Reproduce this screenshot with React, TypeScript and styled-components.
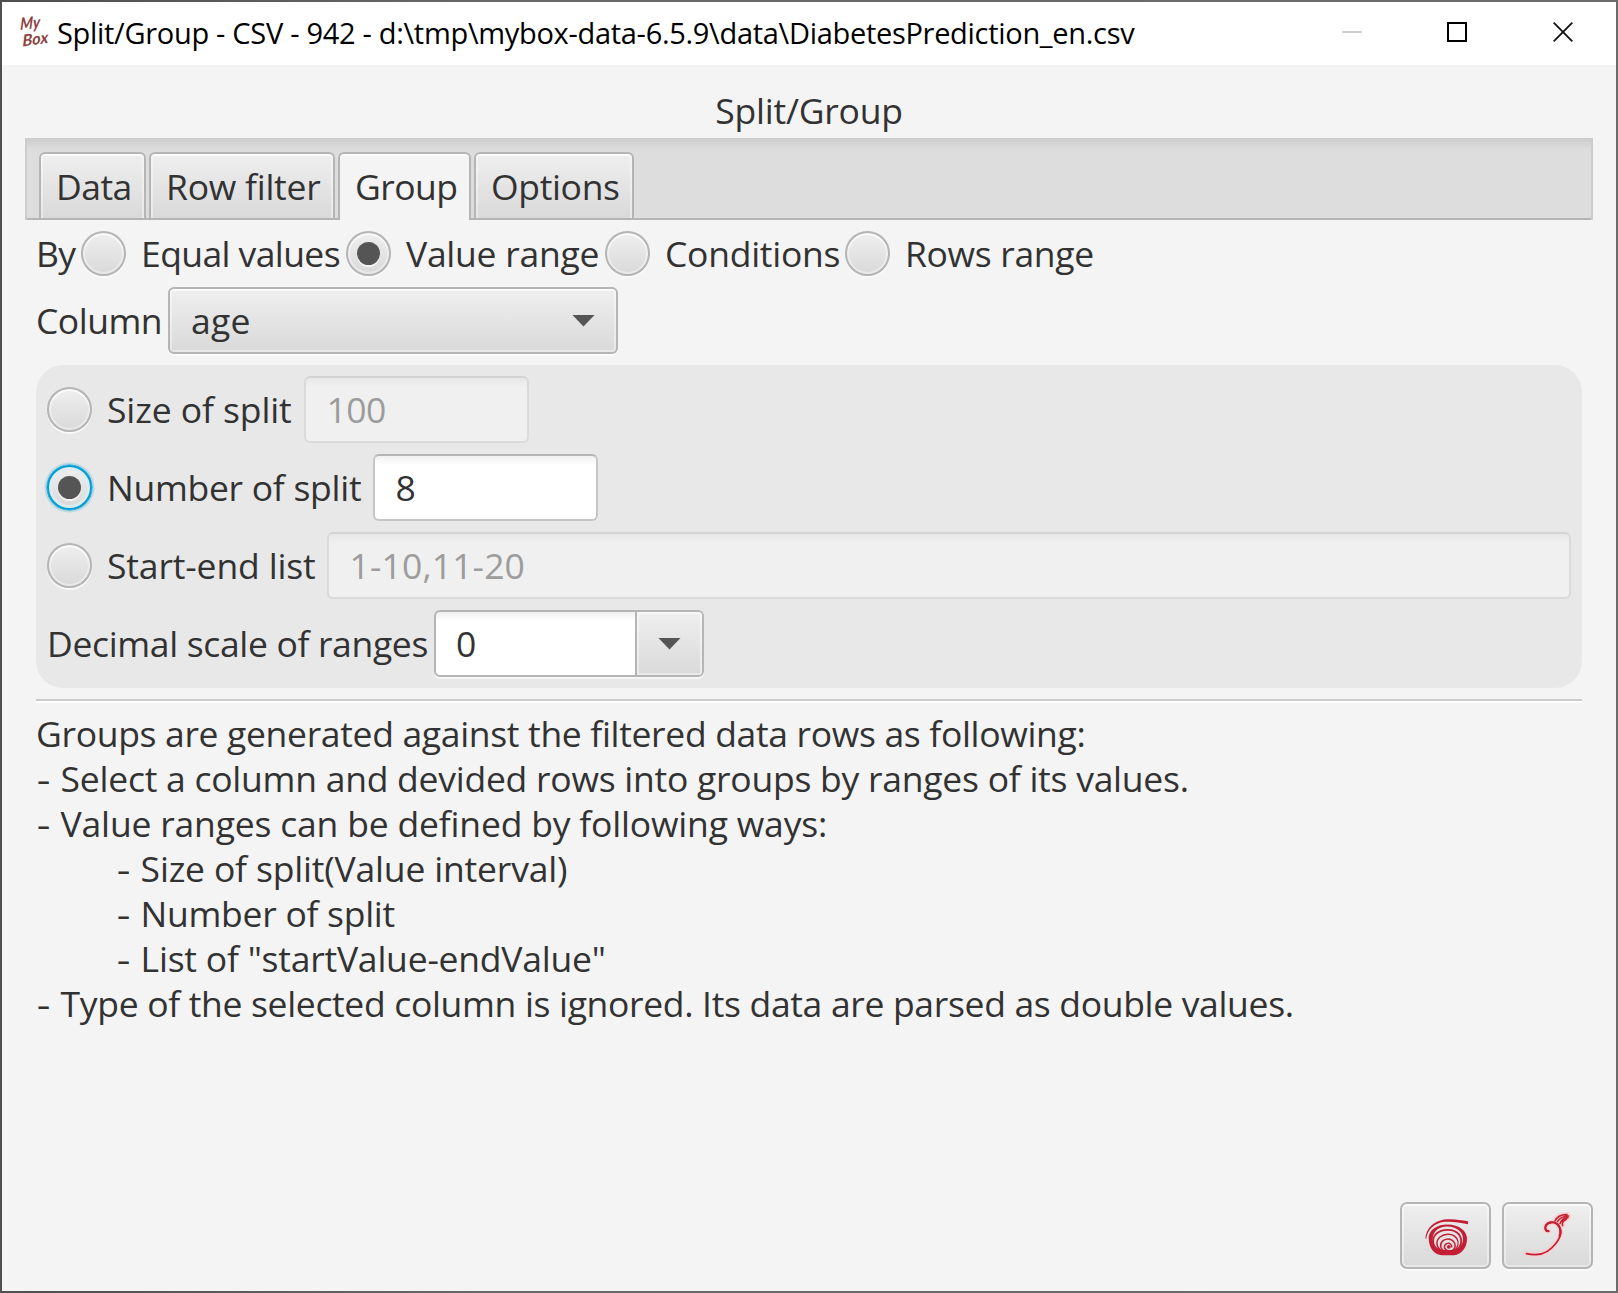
import React from "react";
import styled, { createGlobalStyle, css } from "styled-components";

const GlobalStyle = createGlobalStyle`
  *, *::before, *::after { box-sizing: border-box; }
  body { margin: 0; background: #5e5e5e; }
`;

const bevel = css`
  border: 2px solid #b5b5b5;
  background: linear-gradient(#efefef, #d9d9d9);
  box-shadow: inset 0 0 0 2px rgba(255, 255, 255, 0.4), inset 0 2px 0 rgba(255, 255, 255, 0.6), 0 2px 0 #fafafa;
`;

const Frame = styled.div`
  width: 1618px;
  height: 1293px;
  padding: 2px;
  background: linear-gradient(90deg, #4f4f4f, #686868 30%, #6b6b6b);
  font-family: "Open Sans", "Noto Sans", sans-serif;
  font-size: 35.5px;
  color: #323232;
`;
const Window = styled.div`
  width: 1614px;
  height: 1289px;
  background: #f4f4f4;
  display: flex;
  flex-direction: column;
`;
const TitleBar = styled.header`
  height: 63px;
  flex: none;
  background: #fff;
  display: flex;
  align-items: center;
  padding: 0 43px 4px 17px;
`;
const Logo = styled.svg`
  width: 32px;
  height: 34px;
  margin-right: 6px;
  flex: none;
  overflow: visible;
`;
const TitleText = styled.span<{ $track: number }>`
  flex: 1;
  padding-top: 3px;
  font-size: 29px;
  line-height: 40px;
  color: #000;
  white-space: pre;
  letter-spacing: ${(p) => p.$track}px;
`;
const WindowControls = styled.div`
  display: flex;
  gap: 85px;
`;
const Control = styled.svg`
  width: 20px;
  height: 20px;
  display: block;
  overflow: visible;
  &:last-child { margin-left: 1px; }
`;
const Text = styled.span<{ $w?: number; $track?: number }>`
  display: block;
  flex: none;
  white-space: pre;
  line-height: 45px;
  width: ${(p) => (p.$w ? `${p.$w}px` : "auto")};
  letter-spacing: ${(p) => p.$track ?? 0}px;
`;
const Heading = styled.h1`
  margin: 0;
  height: 73px;
  padding-top: 23px;
  display: flex;
  justify-content: center;
  font-size: inherit;
  font-weight: 400;
`;
const TabHeader = styled.nav`
  margin: 0 23px;
  height: 82px;
  flex: none;
  display: flex;
  gap: 3px;
  padding: 14px 0 0 12.4px;
  background: linear-gradient(#b5b5b5, #b5b5b5) 0 100% / 100% 2px no-repeat, linear-gradient(#cbcbcb, #dddddd 11px);
  border: solid #cdcdcd;
  border-width: 0 2px;
`;
const Tab = styled.div<{ $w: number; $active?: boolean }>`
  width: ${(p) => p.$w}px;
  height: 68px;
  display: flex;
  padding: 10px 0 0 14.6px;
  border: 2px solid #b5b5b5;
  border-radius: 6px 6px 0 0;
  ${(p) =>
    p.$active
      ? css`
          border-bottom: 0;
          background: #f4f4f4;
          box-shadow: inset 0 2px 0 #fbfbfb;
        `
      : css`
          background: linear-gradient(#efefef, #d9d9d9);
          box-shadow: inset 0 2px 0 #fafafa, inset 2px 0 0 rgba(255, 255, 255, 0.4), inset -2px 0 0 rgba(255, 255, 255, 0.4);
        `}
`;
const Body = styled.main`
  padding: 11px 34px 0;
  flex: 1;
`;
const Row = styled.div<{ $h: number }>`
  height: ${(p) => p.$h}px;
  display: flex;
  align-items: center;
`;
const RadioDot = styled.span<{ $on?: boolean; $focus?: boolean }>`
  width: 45px;
  height: 45px;
  flex: none;
  margin-right: 15px;
  border-radius: 50%;
  display: flex;
  align-items: center;
  justify-content: center;
  ${bevel}
  ${(p) =>
    p.$focus &&
    css`
      border-color: #039ed3;
      box-shadow: 0 0 0 0.5px #039ed3, 0 0 0 2.5px rgba(3, 158, 211, 0.2), inset 0 0 0 3px rgba(220, 236, 242, 0.9);
    `}
  &::after {
    content: "";
    display: ${(p) => (p.$on ? "block" : "none")};
    width: 23px;
    height: 23px;
    border-radius: 50%;
    background: #555;
    box-shadow: 0 2px 0 #f4f4f4;
  }
`;
const Combo = styled.div`
  width: 450px;
  height: 67px;
  display: flex;
  align-items: center;
  justify-content: space-between;
  padding: 0 21px;
  border-radius: 6px;
  ${bevel}
`;
const Arrow = styled.span`
  width: 23px;
  height: 12px;
  background: #555;
  clip-path: polygon(0 0, 100% 0, 50% 100%);
`;
const Panel = styled.section`
  height: 323px;
  padding: 11px;
  border-radius: 27px;
  background: #e8e8e8;
  display: flex;
  flex-direction: column;
  gap: 11px;
`;
const Field = styled.div<{ $w?: number; $disabled?: boolean }>`
  ${(p) => (p.$w ? css`width: ${p.$w}px;` : css`flex: 1;`)}
  height: 67px;
  display: flex;
  align-items: center;
  padding-left: 20.5px;
  border-radius: 6px;
  border: 2px solid ${(p) => (p.$disabled ? "#dadada" : "#c6c6c6")};
  border-top-color: ${(p) => (p.$disabled ? "#d3d3d3" : "#b5b5b5")};
  background: ${(p) => (p.$disabled ? "linear-gradient(#e8e8e8, #f0f0f0 9px)" : "linear-gradient(#f0f0f0, #fff 9px)")};
  color: ${(p) => (p.$disabled ? "#9c9c9c" : "inherit")};
`;
const EditableCombo = styled.div`
  width: 270px;
  height: 67px;
  display: flex;
  border: 2px solid #b5b5b5;
  border-radius: 6px;
  overflow: hidden;
  background: linear-gradient(#f0f0f0, #fff 9px);
  box-shadow: 0 2px 0 #f6f6f6;
`;
const ComboValue = styled.div`
  flex: 1;
  display: flex;
  align-items: center;
  padding-left: 20px;
`;
const ComboButton = styled.div`
  width: 67px;
  display: flex;
  align-items: center;
  justify-content: center;
  border-left: 2px solid #b5b5b5;
  background: linear-gradient(#efefef, #d9d9d9);
  box-shadow: inset 0 0 0 2px rgba(255, 255, 255, 0.45);
`;
const Separator = styled.hr`
  margin: 11px 0 8px;
  height: 4px;
  border: 0;
  border-top: 2px solid #cbcbcb;
  background: #fff;
`;
const Notes = styled.div`
  display: flex;
  flex-direction: column;
`;
const Note = styled.div<{ $indent?: boolean }>`
  display: flex;
  height: 45px;
  padding-left: ${(p) => (p.$indent ? 80 : 0)}px;
`;
const Dash = styled(Text)`
  width: 24.6px;
  padding-left: 0.6px;
  transform: scaleX(1.2);
  transform-origin: 0 50%;
`;
const Footer = styled.footer`
  display: flex;
  justify-content: flex-end;
  gap: 11px;
  padding: 0 23px 22px;
`;
const IconButton = styled.button`
  width: 91px;
  height: 67px;
  padding: 0;
  border-radius: 7px;
  ${bevel}
  svg {
    display: block;
    width: 87px;
    height: 63px;
  }
`;

const Radio = ({ label, w, track, on, focus }: { label: string; w: number; track: number; on?: boolean; focus?: boolean }) => (
  <>
    <RadioDot $on={on} $focus={focus} />
    <Text $w={w} $track={track}>{label}</Text>
  </>
);

const tabs = [
  { label: "Data", w: 107, track: -0.5 },
  { label: "Row filter", w: 186, track: -0.25 },
  { label: "Group", w: 133, track: -0.55, active: true },
  { label: "Options", w: 160, track: -0.33 },
];

const notes: { text: string; bullet?: boolean; indent?: boolean; track: number }[] = [
  { text: "Groups are generated against the filtered data rows as following:", track: -0.33 },
  { text: "Select a column and devided rows into groups by ranges of its values.", bullet: true, track: -0.25 },
  { text: "Value ranges can be defined by following ways:", bullet: true, track: -0.19 },
  { text: "Size of split(Value interval)", bullet: true, indent: true, track: -0.18 },
  { text: "Number of split", bullet: true, indent: true, track: -0.28 },
  { text: 'List of "startValue-endValue"', bullet: true, indent: true, track: -0.22 },
  { text: "Type of the selected column is ignored. Its data are parsed as double values.", bullet: true, track: -0.33 },
];

const plume = (
  <>
    <path d="M44.5 27.2C41.5 27.6 40.4 24 42 21.4C44.2 17.8 50.4 17 53.8 20.6C58 25.4 57.4 32 52.6 38.4C47 46 39.4 50.8 31 50.6C27.4 50.6 25 50.2 22.4 49.6" />
    <path d="M51 17C52.6 13.4 56 10.4 63 10.6M53.4 17.6C55.4 14.4 59 12.2 64.5 12M56 19.4C57 16.6 60 14.2 64 13.6M58.6 21.4C57.8 19 59.4 16.6 62 15.4" />
  </>
);

export default function App() {
  return (
    <Frame>
      <GlobalStyle />
      <Window>
        <TitleBar>
          <Logo viewBox="0 0 32 34" fill="#8f3f40" fontFamily="Lato, sans-serif" fontStyle="italic" fontWeight="700">
            <text x="0" y="0" fontSize="17" transform="translate(1 15) rotate(-6) skewX(-8)" textLength="20" lengthAdjust="spacingAndGlyphs">My</text>
            <text x="0" y="0" fontSize="16" transform="translate(3.5 31.5) rotate(-8) skewX(-8)" textLength="26" lengthAdjust="spacingAndGlyphs">Box</text>
          </Logo>
          <TitleText $track={-0.3}>{"Split/Group - CSV - 942 - d:\\tmp\\mybox-data-6.5.9\\data\\DiabetesPrediction_en.csv"}</TitleText>
          <WindowControls>
            <Control viewBox="0 0 20 20"><path d="M0 10H20" stroke="#ccc" strokeWidth="2" /></Control>
            <Control viewBox="0 0 20 20"><path d="M1 1H19V19H1Z" fill="none" stroke="#000" strokeWidth="2" /></Control>
            <Control viewBox="0 0 20 20"><path d="M.7 .7L19.3 19.3M19.3 .7L.7 19.3" stroke="#111" strokeWidth="1.8" /></Control>
          </WindowControls>
        </TitleBar>
        <Heading><Text $track={-0.22}>Split/Group</Text></Heading>
        <TabHeader>
          {tabs.map((t) => (
            <Tab key={t.label} $w={t.w} $active={t.active}><Text $track={t.track}>{t.label}</Text></Tab>
          ))}
        </TabHeader>
        <Body>
          <Row $h={45}>
            <Text $w={45} $track={-0.7}>By</Text>
            <Radio label="Equal values" w={205} track={-0.6} />
            <Radio label="Value range" w={199} track={-0.26} on />
            <Radio label="Conditions" w={180} track={-0.27} />
            <Radio label="Rows range" w={200} track={-0.33} />
          </Row>
          <Row $h={89}>
            <Text $w={132} $track={-0.5}>Column</Text>
            <Combo><Text $track={0.3}>age</Text><Arrow /></Combo>
          </Row>
          <Panel>
            <Row $h={67}>
              <Radio label="Size of split" w={197} track={-0.1} />
              <Field $w={225} $disabled><Text $track={-0.5}>100</Text></Field>
            </Row>
            <Row $h={67}>
              <Radio label="Number of split" w={266} track={-0.28} on focus />
              <Field $w={225}><Text>8</Text></Field>
            </Row>
            <Row $h={67}>
              <Radio label="Start-end list" w={220} track={-0.14} />
              <Field $disabled><Text $track={0.14}>1-10,11-20</Text></Field>
            </Row>
            <Row $h={67}>
              <Text $w={387} $track={-0.34}>Decimal scale of ranges</Text>
              <EditableCombo>
                <ComboValue><Text>0</Text></ComboValue>
                <ComboButton><Arrow /></ComboButton>
              </EditableCombo>
            </Row>
          </Panel>
          <Separator />
          <Notes>
            {notes.map((n) => (
              <Note key={n.text} $indent={n.indent}>
                {n.bullet && <Dash>-</Dash>}
                <Text $track={n.track}>{n.text}</Text>
              </Note>
            ))}
          </Notes>
        </Body>
        <Footer>
          <IconButton aria-label="Spiral">
            <svg viewBox="0 0 87 63" fill="none" stroke="#c41e35" strokeLinecap="butt">
              <path d="M23.4 34.8C24 24 32 17.4 42 15.6C50 14.4 58 15.8 66 17.2V20.2C57 18.4 50 17.2 43 17.8C33 18.8 25.6 25 24.2 34.8Z" fill="#c41e35" stroke="none" />
              <path d="M26.6 34C27 44 32 51 40 51.2H52C59 50.6 65 44 65 35C65 27 58 20.6 45 20.4C36 20.4 27 25 26.6 34ZM30.6 35C31 26.6 38 22.6 45 22.6C55 22.8 61 28 61 35C61 40.6 57.6 44.6 52 46H40C34 44.4 30.6 40 30.6 35Z" fill="#c41e35" fillRule="evenodd" stroke="none" />
              <path d="M37 47C30 42.6 29.6 34.6 34 30C40 24.4 52 24.6 57 30.4C61 36 59.4 43 54 47" strokeWidth="1.8" />
              <path d="M40 47C33.4 43 33.8 36.6 38 33C43 28.8 51 29.4 54.6 34.2C57.4 38.6 56 43.6 52 47" strokeWidth="1.5" />
              <path d="M43 47.4C37.4 45 37.6 39 41.4 36.4C45.6 33.6 50.8 35 52.6 39C53.8 42.4 52.4 45.6 49.6 47" strokeWidth="1.5" />
              <path d="M46 46.6C41.8 46 41.2 41.2 44.6 39.6C48 38.4 50.6 41 49.6 43.6" strokeWidth="1.4" />
              <circle cx="46.8" cy="42.8" r="1.9" fill="#c41e35" stroke="none" />
            </svg>
          </IconButton>
          <IconButton aria-label="Plume">
            <svg viewBox="0 0 87 63" fill="none" strokeLinecap="round">
              <g stroke="#fbcfcf" strokeOpacity="0.7" strokeWidth="5.5">{plume}</g>
              <g stroke="#c41e30" strokeWidth="1.6">{plume}</g>
              <path d="M44.5 27.2C41.5 27.6 40.4 24 42 21.4C44.2 17.8 50.4 17 53.8 20.6C56.6 24 57 28 55.6 32" stroke="#c41e30" strokeWidth="2.2" />
            </svg>
          </IconButton>
        </Footer>
      </Window>
    </Frame>
  );
}
